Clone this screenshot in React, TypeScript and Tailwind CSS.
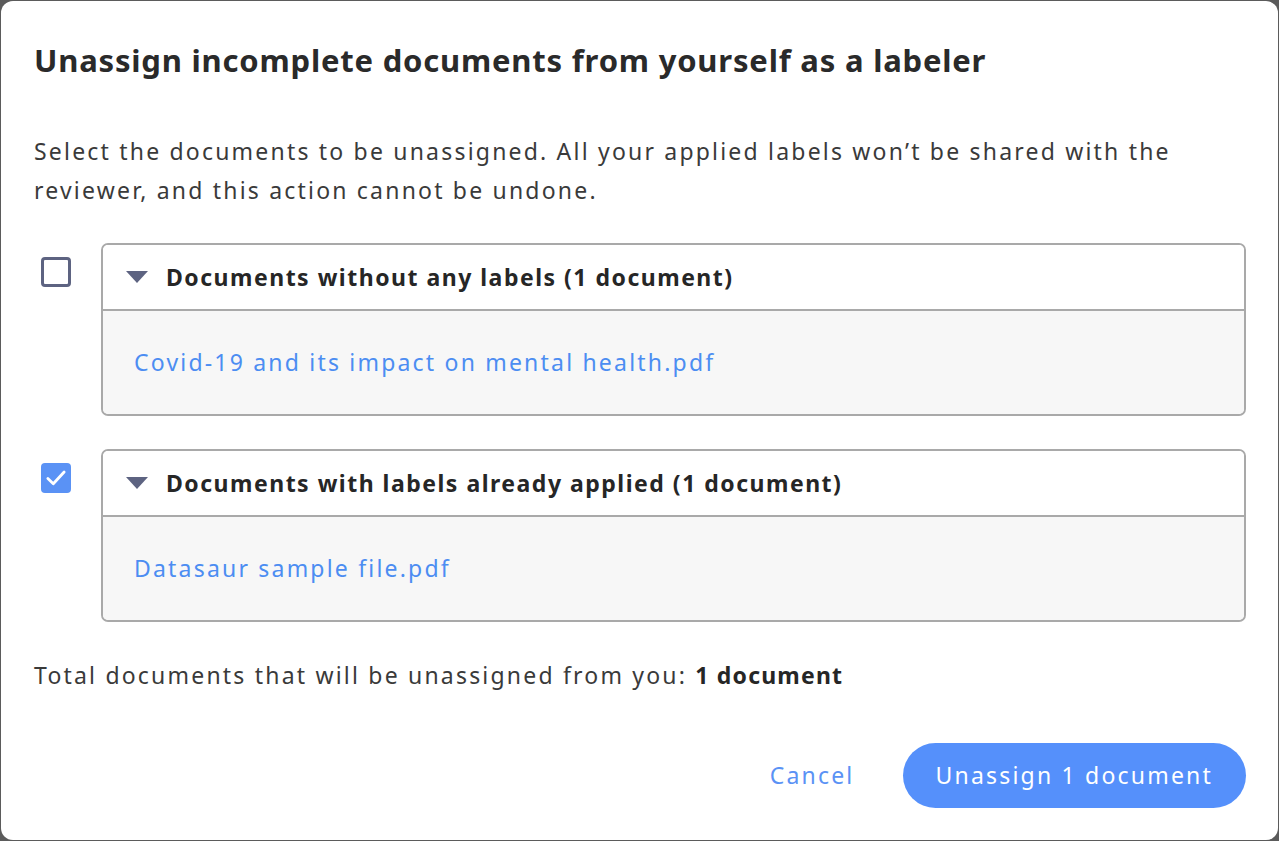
import { useState } from "react";

const font = { fontFamily: '"Noto Sans", "Open Sans", sans-serif' };

function Check({ checked, onClick }: { checked: boolean; onClick: () => void }) {
  return (
    <button
      onClick={onClick}
      className={`mt-[14px] ml-[7px] w-[30px] h-[30px] rounded-[4px] flex items-center justify-center shrink-0 ${
        checked ? "bg-[#5a92f5]" : "border-[3px] border-[#5d6381] bg-white"
      }`}
    >
      {checked && (
        <svg viewBox="0 0 24 24" className="w-[26px] h-[26px]" fill="none" stroke="white" strokeWidth={2.6} strokeLinecap="round" strokeLinejoin="round">
          <path d="M4.5 12.5l5 4.8L19.5 6.5" />
        </svg>
      )}
    </button>
  );
}

function Group({ title, file, checked, onToggle }: { title: string; file: string; checked: boolean; onToggle: () => void }) {
  return (
    <div className="flex">
      <div className="w-[67px] shrink-0">
        <Check checked={checked} onClick={onToggle} />
      </div>
      <div className="flex-1 border-2 border-[#a9a9a9] rounded-[7px] overflow-hidden">
        <div className="h-[66px] flex items-center pl-[23px] border-b-2 border-[#a9a9a9] bg-white">
          <svg viewBox="0 0 22 12" className="w-[22px] h-[12px] shrink-0" fill="#5d6381">
            <path d="M0 0h22L11 12z" />
          </svg>
          <span className="ml-[18px] text-[23px] font-bold text-[#262626] tracking-[1.5px]">{title}</span>
        </div>
        <div className="h-[103px] flex items-center pl-[31px] bg-[#f7f7f7]">
          <a className="text-[23px] text-[#4c8df2] tracking-[2.2px] cursor-pointer">{file}</a>
        </div>
      </div>
    </div>
  );
}

export default function App() {
  const [a, setA] = useState(false);
  const [b, setB] = useState(true);
  const count = (a ? 1 : 0) + (b ? 1 : 0);

  return (
    <div className="w-[1279px] h-[841px] bg-[#5b5b5b] p-[1px]" style={font}>
      <div className="h-[839px] bg-white rounded-[12px] pl-[33px] pr-[32px] pt-[40px] flex flex-col">
        <h1 className="text-[31px] leading-[38px] font-bold text-[#2a2a2a] tracking-[0.8px]">
          Unassign incomplete documents from yourself as a labeler
        </h1>
        <p className="mt-[53px] text-[23px] leading-[39px] text-[#3a3a3a] tracking-[2.2px]">
          Select the documents to be unassigned. All your applied labels won’t be shared with the
          <br />
          reviewer, and this action cannot be undone.
        </p>
        <div className="mt-[33px] flex flex-col gap-[33px]">
          <Group
            title="Documents without any labels (1 document)"
            file="Covid-19 and its impact on mental health.pdf"
            checked={a}
            onToggle={() => setA(!a)}
          />
          <Group
            title="Documents with labels already applied (1 document)"
            file="Datasaur sample file.pdf"
            checked={b}
            onToggle={() => setB(!b)}
          />
        </div>
        <p className="mt-[38px] text-[23px] leading-[30px] text-[#3a3a3a] tracking-[2.2px]">
          Total documents that will be unassigned from you:{" "}
          <span className="font-bold text-[#262626] tracking-[1.2px]">
            {count} document{count === 1 ? "" : "s"}
          </span>
        </p>
        <div className="mt-[53px] flex justify-end items-center gap-[48px]">
          <button className="text-[23px] text-[#5a92f5] tracking-[2.2px]">Cancel</button>
          <button className="h-[65px] px-[33px] rounded-full bg-[#5590fb] text-white text-[23px] tracking-[2.2px]">
            Unassign {count} document{count === 1 ? "" : "s"}
          </button>
        </div>
      </div>
    </div>
  );
}
